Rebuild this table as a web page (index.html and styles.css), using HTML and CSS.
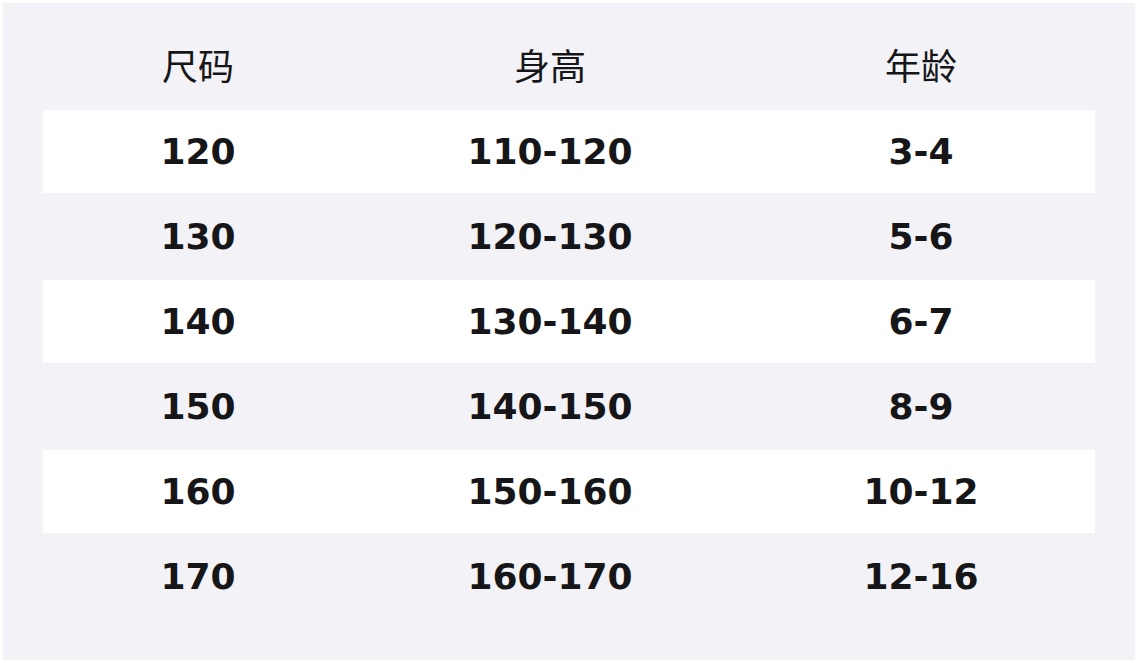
FILE: index.html
```html
<!DOCTYPE html>
<html lang="zh">
<head>
<meta charset="utf-8">
<title>尺码表</title>
<link rel="stylesheet" href="styles.css">
</head>
<body>
<div class="panel">
  <div class="table">
    <div class="row head"><div>尺码</div><div>身高</div><div>年龄</div></div>
    <div class="row odd"><div>120</div><div>110-120</div><div>3-4</div></div>
    <div class="row"><div>130</div><div>120-130</div><div>5-6</div></div>
    <div class="row odd"><div>140</div><div>130-140</div><div>6-7</div></div>
    <div class="row"><div>150</div><div>140-150</div><div>8-9</div></div>
    <div class="row odd"><div>160</div><div>150-160</div><div>10-12</div></div>
    <div class="row"><div>170</div><div>160-170</div><div>12-16</div></div>
  </div>
</div>
</body>
</html>
```
FILE: styles.css
```css
html, body {
  margin: 0;
  padding: 0;
  background: #ffffff;
}
body {
  padding: 3px;
  box-sizing: border-box;
  height: 663px;
}
.panel {
  background: #f2f2f7;
  height: 657px;
  box-sizing: border-box;
  padding: 22px 40px 0 40px;
  font-family: "DejaVu Sans", "Noto Sans CJK SC", sans-serif;
  color: #161618;
}
.table {
  display: flex;
  flex-direction: column;
  gap: 2px;
}
.row {
  display: grid;
  grid-template-columns: 310px 394px 348px;
  height: 83px;
  box-sizing: border-box;
  align-items: center;
  font-size: 36px;
  font-weight: bold;
}
.row > div {
  text-align: center;
  line-height: 1;
}
.row.odd {
  background: #ffffff;
}
.row.head {
  font-family: "Noto Sans CJK SC", sans-serif;
  font-weight: normal;
  padding-bottom: 6px;
}
```
